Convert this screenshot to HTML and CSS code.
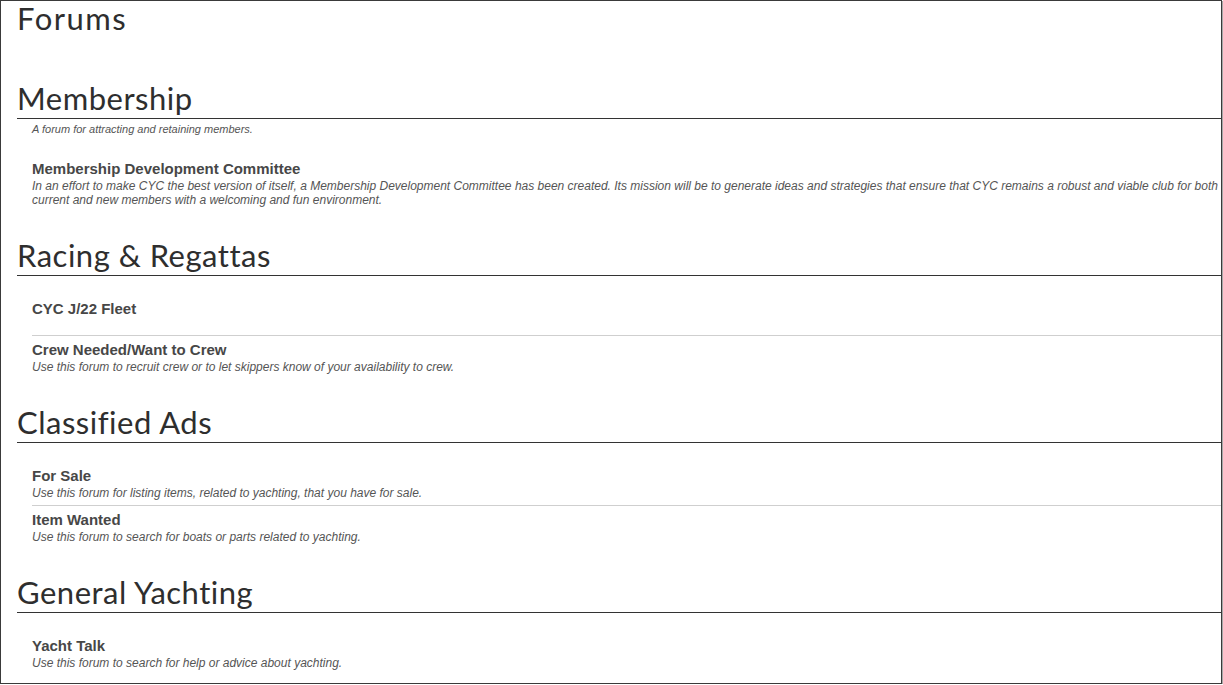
FILE: index.html
```html
<!DOCTYPE html>
<html lang="en">
<head>
<meta charset="utf-8">
<title>Forums</title>
<link rel="stylesheet" href="styles.css">
</head>
<body>
<div class="frame">
  <h1 class="page-title">Forums</h1>

  <section class="category first">
    <h2 class="category-title">Membership</h2>
    <p class="category-desc">A forum for attracting and retaining members.</p>
    <ul class="forum-list">
      <li class="forum">
        <div class="forum-name">Membership Development Committee</div>
        <div class="forum-desc">In an effort to make CYC the best version of itself, a Membership Development Committee has been created. Its mission will be to generate ideas and strategies that ensure that CYC remains a robust and viable club for both current and new members with a welcoming and fun environment.</div>
      </li>
    </ul>
  </section>

  <section class="category">
    <h2 class="category-title">Racing &amp; Regattas</h2>
    <ul class="forum-list">
      <li class="forum">
        <div class="forum-name">CYC J/22 Fleet</div>
        <div class="forum-desc empty"></div>
      </li>
      <li class="forum">
        <div class="forum-name">Crew Needed/Want to Crew</div>
        <div class="forum-desc">Use this forum to recruit crew or to let skippers know of your availability to crew.</div>
      </li>
    </ul>
  </section>

  <section class="category">
    <h2 class="category-title">Classified Ads</h2>
    <ul class="forum-list">
      <li class="forum">
        <div class="forum-name">For Sale</div>
        <div class="forum-desc">Use this forum for listing items, related to yachting, that you have for sale.</div>
      </li>
      <li class="forum">
        <div class="forum-name">Item Wanted</div>
        <div class="forum-desc">Use this forum to search for boats or parts related to yachting.</div>
      </li>
    </ul>
  </section>

  <section class="category">
    <h2 class="category-title">General Yachting</h2>
    <ul class="forum-list">
      <li class="forum">
        <div class="forum-name">Yacht Talk</div>
        <div class="forum-desc">Use this forum to search for help or advice about yachting.</div>
      </li>
    </ul>
  </section>
</div>
</body>
</html>
```

FILE: styles.css
```css
html, body {
  margin: 0;
  padding: 0;
  background: #ffffff;
}

.frame {
  box-sizing: border-box;
  width: 1222px;
  height: 684px;
  border: 1px solid #3a3a3a;
  box-shadow: 1px 1px 0 #a8a8a8;
  padding: 0 0 0 16px;
  overflow: hidden;
}

.page-title,
.category-title {
  font-family: Lato, "Open Sans", sans-serif;
  font-weight: 400;
  font-size: 31px;
  letter-spacing: 0.5px;
  line-height: 36px;
  color: #2e2e2e;
  margin: 0;
}

.page-title {
  margin-top: -1px;
  letter-spacing: 1.5px;
}

.category {
  margin-top: 25px;
}

.category.first {
  margin-top: 44px;
}

.category-title {
  padding-bottom: 2px;
  border-bottom: 1px solid #333333;
}

.category-desc {
  margin: 0;
  padding: 4px 0 0 15px;
  font-family: "Liberation Sans", Arial, sans-serif;
  font-style: italic;
  font-size: 11px;
  line-height: 13px;
  color: #555555;
}

.forum-list {
  list-style: none;
  margin: 0;
  padding: 19px 0 0 15px;
}

.forum {
  padding: 4px 0 5px;
}

.forum + .forum {
  border-top: 1px solid #cfcfcf;
}

.forum-name {
  font-family: "Liberation Sans", Arial, sans-serif;
  font-weight: 700;
  font-size: 15px;
  line-height: 20px;
  color: #474747;
}

.forum-desc {
  font-family: "Liberation Sans", Arial, sans-serif;
  font-style: italic;
  font-size: 12px;
  line-height: 14px;
  color: #555555;
}

.forum-desc.empty {
  height: 11px;
}
```
